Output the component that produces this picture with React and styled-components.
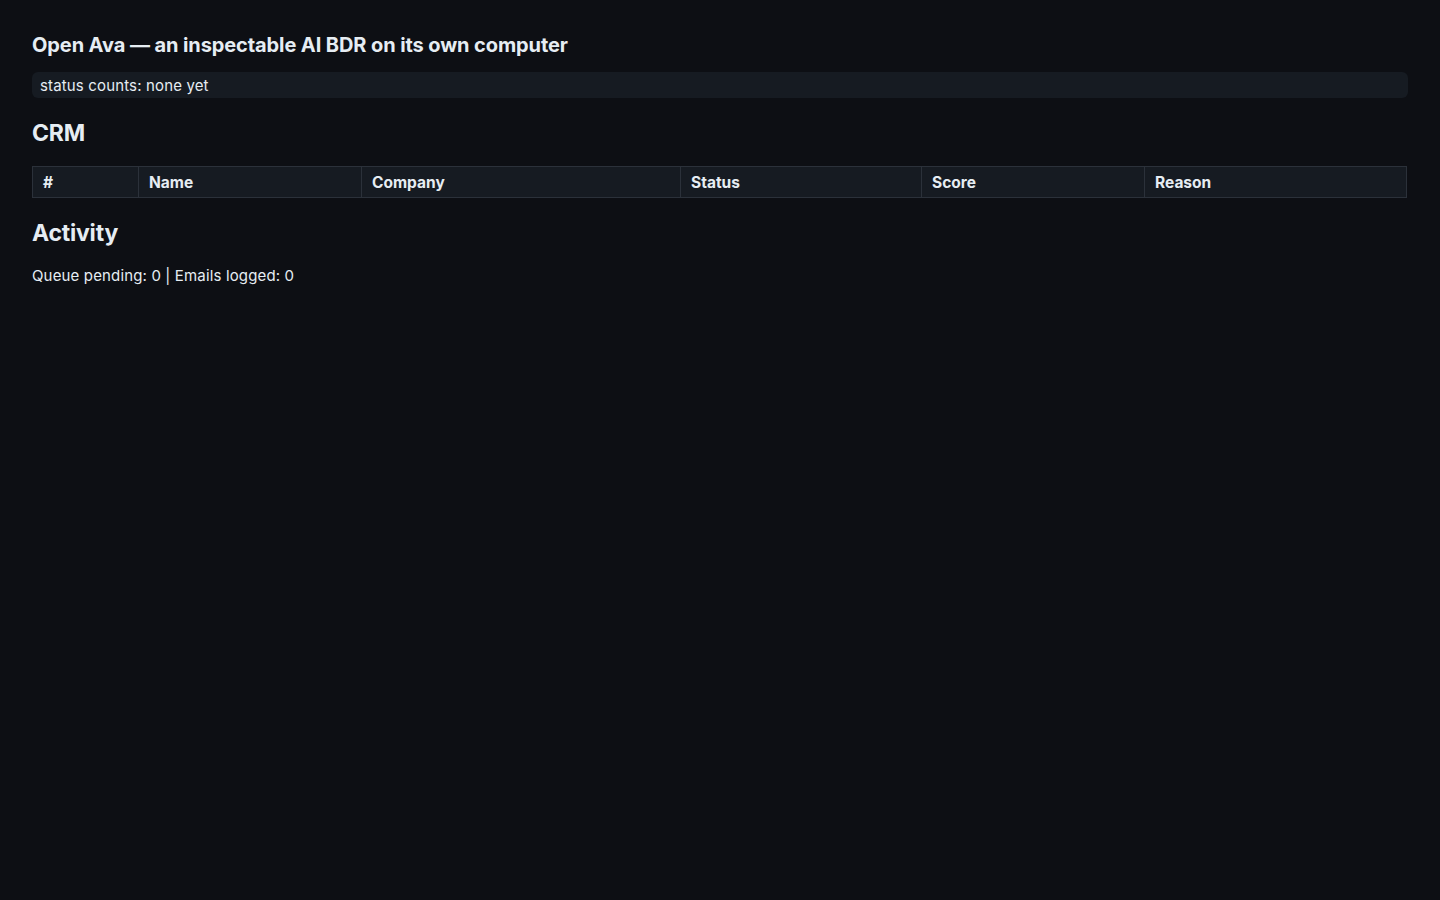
import React from 'react';
import styled, { createGlobalStyle } from 'styled-components';

const GlobalStyle = createGlobalStyle`
  html, body {
    margin: 0;
    background: #0d0f14;
  }
  body {
    padding: 33px 32px;
    color: #e6edf3;
    font-family: Inter, "Noto Sans", "Liberation Sans", sans-serif;
    font-size: 15px;
  }
`;

// widths measured from the outer edges of each header cell
const columns = [
  { label: '#', width: 106 },
  { label: 'Name', width: 223 },
  { label: 'Company', width: 319 },
  { label: 'Status', width: 241 },
  { label: 'Score', width: 223 },
  { label: 'Reason', width: 262 },
];

export default function App() {
  return (
    <>
      <GlobalStyle />
      <Title>Open Ava — an inspectable AI BDR on its own computer</Title>
      <StatusBar>status counts: none yet</StatusBar>

      <SectionTitle>CRM</SectionTitle>
      <Table>
        <colgroup>
          {columns.map((c) => (
            <col key={c.label} style={{ width: `${c.width}px` }} />
          ))}
        </colgroup>
        <thead>
          <tr>
            {columns.map((c) => (
              <Th key={c.label}>{c.label}</Th>
            ))}
          </tr>
        </thead>
        <tbody />
      </Table>

      <SectionTitle>Activity</SectionTitle>
      <Summary>Queue pending: 0 | Emails logged: 0</Summary>
    </>
  );
}

const Title = styled.h1`
  margin: 0 0 15px;
  font-size: 20px;
  line-height: 24px;
  font-weight: 700;
  letter-spacing: -0.1px;
`;

const StatusBar = styled.div`
  background: #161b22;
  border-radius: 6px;
  padding: 5px 8px 3px;
  font-size: 15px;
  line-height: 18px;
  letter-spacing: 0.15px;
`;

const SectionTitle = styled.h2`
  margin: 21px 0 19px;
  font-size: 23px;
  line-height: 28px;
  font-weight: 700;
  letter-spacing: -0.2px;
`;

const Table = styled.table`
  width: calc(100% - 2px);
  border-collapse: collapse;
  table-layout: fixed;
`;

const Th = styled.th`
  background: #161b22;
  border: 1px solid #2b313a;
  padding: 7px 10px 5px;
  text-align: left;
  font-size: 15.5px;
  line-height: 18px;
  font-weight: 700;
`;

const Summary = styled.p`
  margin: 0;
  padding-top: 1px;
  font-size: 15px;
  line-height: 18px;
  letter-spacing: 0.15px;
`;
